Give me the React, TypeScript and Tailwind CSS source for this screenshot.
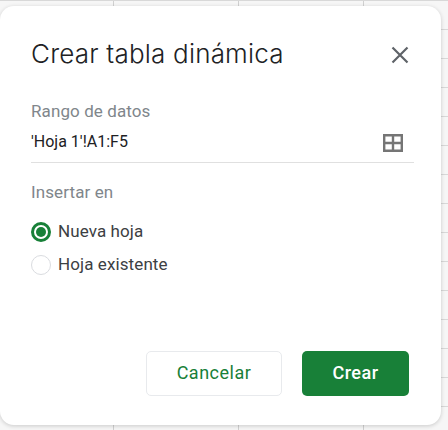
const font = "font-['Roboto',sans-serif]";

function CloseIcon() {
  return (
    <svg width="24" height="24" viewBox="0 0 24 24" fill="none" stroke="#5f6368" strokeWidth="2.2">
      <path d="M4.5 4.5 L19.5 19.5 M19.5 4.5 L4.5 19.5" />
    </svg>
  );
}

function GridIcon() {
  return (
    <svg width="20" height="18" viewBox="0 0 20 18" fill="none" stroke="#757575" strokeWidth="2.4">
      <path d="M1.2 1.2 H18.8 V16.8 H1.2 Z M10 1.2 V16.8 M1.2 9 H18.8" />
    </svg>
  );
}

export default function App() {
  return (
    <div
      className={`h-[430px] w-[448px] overflow-hidden bg-[#f6f6f6] pt-[6px] ${font} bg-[linear-gradient(#d8d8d8_1px,transparent_1px),linear-gradient(90deg,#d0d0d0_1px,transparent_1px)] bg-[size:125px_29px] bg-[position:-12px_0px]`}
    >
      <div className="flex h-[419px] w-[441px] flex-col rounded-[14px] bg-white pl-[31px] pr-[27px] shadow-[0_1px_4px_rgba(0,0,0,0.18)]">
        <div className="mt-[29px] flex items-center justify-between">
          <h1 className="font-['Inter',sans-serif] text-[26px] leading-[38px] font-[350] tracking-[0.2px] text-[#202124]">Crear tabla dinámica</h1>
          <button className="mr-[2px] mt-[1px]">
            <CloseIcon />
          </button>
        </div>

        <p className="mt-[26px] text-[17px] leading-[24px] tracking-[0.1px] text-[#80868b]">Rango de datos</p>
        <div className="flex h-[40px] items-center justify-between border-b border-[#e0e0e0] pb-[1px]">
          <span className="text-[16px] text-[#202124]">'Hoja 1'!A1:F5</span>
          <span className="mr-[11px] mt-[1px]">
            <GridIcon />
          </span>
        </div>

        <p className="mt-[17px] text-[17px] leading-[24px] tracking-[0.1px] text-[#80868b]">Insertar en</p>

        <div className="mt-[16px] flex flex-col gap-[9px] text-[17px] tracking-[0.1px] text-[#3c4043]">
          <label className="flex h-[24px] items-center gap-[7px]">
            <span className="flex h-[20px] w-[20px] items-center justify-center rounded-full border-[3px] border-[#188038]">
              <span className="h-[10px] w-[10px] rounded-full bg-[#188038]" />
            </span>
            Nueva hoja
          </label>
          <label className="flex h-[24px] items-center gap-[7px]">
            <span className="h-[20px] w-[20px] rounded-full border border-[#dadce0]" />
            Hoja existente
          </label>
        </div>

        <div className="mt-[auto] mb-[29px] flex justify-end gap-[20px] pr-[5px]">
          <button className="h-[45px] w-[136px] rounded-[5px] border border-[#e8eaed] bg-white pb-[2px] text-[18px] font-[450] tracking-[0.5px] text-[#188038]">
            Cancelar
          </button>
          <button className="h-[45px] w-[107px] rounded-[5px] bg-[#188038] pb-[2px] text-[18px] font-medium tracking-[0.5px] text-white">
            Crear
          </button>
        </div>
      </div>
    </div>
  );
}
